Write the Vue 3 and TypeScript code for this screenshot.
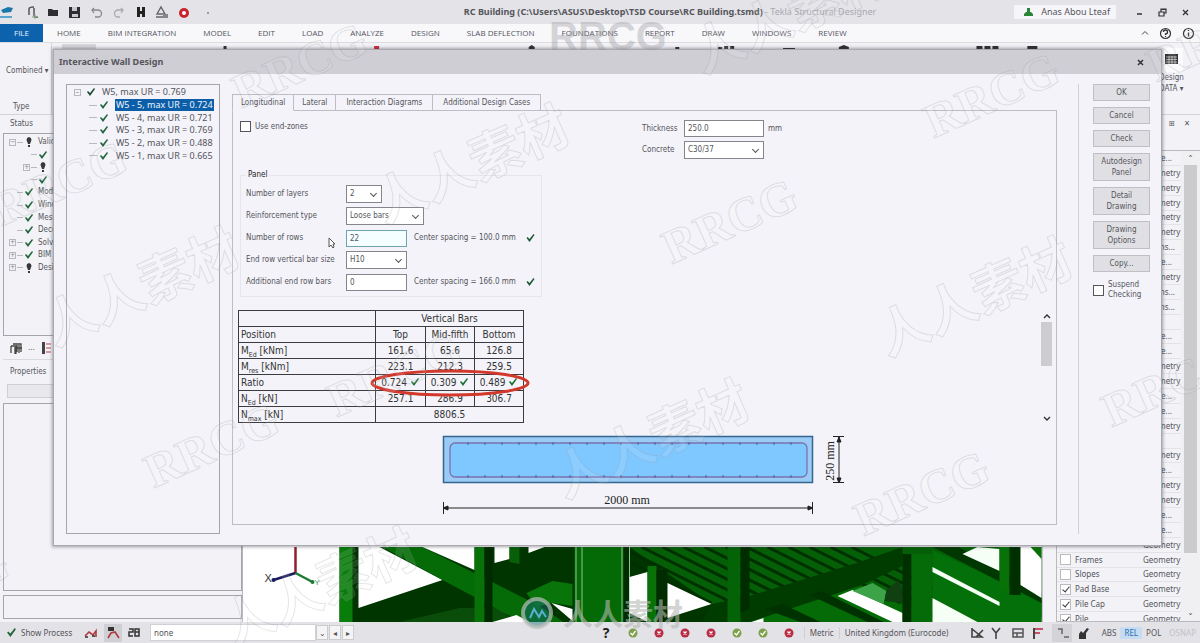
<script setup lang="ts">
import { ref } from 'vue'

const menus = ['HOME', 'BIM INTEGRATION', 'MODEL', 'EDIT', 'LOAD', 'ANALYZE', 'DESIGN', 'SLAB DEFLECTION', 'FOUNDATIONS', 'REPORT', 'DRAW', 'WINDOWS', 'REVIEW']

interface Node { label: string; mark: 'ok' | 'warn'; depth: number; box?: string }
const statusTree: Node[] = [
  { label: 'Validation', mark: 'warn', depth: 0, box: '−' },
  { label: '', mark: 'ok', depth: 1 },
  { label: '', mark: 'warn', depth: 1, box: '+' },
  { label: '', mark: 'ok', depth: 1 },
  { label: 'Model', mark: 'ok', depth: 0 },
  { label: 'Wind', mark: 'ok', depth: 0 },
  { label: 'Mesh', mark: 'ok', depth: 0 },
  { label: 'Decomposition', mark: 'ok', depth: 0 },
  { label: 'Solver', mark: 'ok', depth: 0, box: '+' },
  { label: 'BIM', mark: 'ok', depth: 0, box: '+' },
  { label: 'Design', mark: 'warn', depth: 0, box: '+' },
]

const wallNodes = ['W5 - 5, max UR = 0.724', 'W5 - 4, max UR = 0.721', 'W5 - 3, max UR = 0.769', 'W5 - 2, max UR = 0.488', 'W5 - 1, max UR = 0.665']
const selectedWall = ref(0)

const tabs = ['Longitudinal', 'Lateral', 'Interaction Diagrams', 'Additional Design Cases']
const activeTab = ref(0)

const useEndZones = ref(false)
const suspend = ref(false)
const thickness = ref('250.0')
const rows = ref('22')
const extraBars = ref('0')
const actions = ['OK', 'Cancel', 'Check', 'Autodesign Panel', 'Detail Drawing', 'Drawing Options', 'Copy...']

const results = [
  { base: 'M', sub: 'Ed', unit: '[kNm]', values: ['161.6', '65.6', '126.8'], ok: false },
  { base: 'M', sub: 'res', unit: '[kNm]', values: ['223.1', '212.3', '259.5'], ok: false },
  { base: 'Ratio', sub: '', unit: '', values: ['0.724', '0.309', '0.489'], ok: true },
  { base: 'N', sub: 'Ed', unit: '[kN]', values: ['257.1', '286.9', '306.7'], ok: false },
]

interface Layer { name: string; kind: string; on?: boolean }
const hidden = ['Name...', 'Geometry', 'Geometry', 'Geometry', 'Geometry', 'Geometry', 'Beams...', 'Name...', 'Geometry', 'Beams...', 'Beams...', '', 'Name...', 'Name...', 'Geometry', 'Geometry', 'Name...', 'Name...', 'Geometry', '', 'Geometry', 'Name...', 'Geometry', 'Geometry', 'Name...', 'Name...', 'Geometry']
const layers: Layer[] = [
  ...hidden.map((kind) => ({ name: '', kind })),
  { name: 'Frames', kind: 'Geometry', on: false },
  { name: 'Slopes', kind: 'Geometry', on: false },
  { name: 'Pad Base', kind: 'Geometry', on: true },
  { name: 'Pile Cap', kind: 'Geometry', on: true },
  { name: 'Pile', kind: 'Geometry', on: true },
]

const checks = [true, false, false, false, true, true, false]
const barTicks = Array.from({ length: 20 }, (_, i) => 468 + i * 17)
const joists = Array.from({ length: 13 }, (_, i) => i)

const latin = [[300, 66], [730, 222], [992, 96], [60, 184], [212, 446], [922, 494], [1170, 385], [-58, 590], [395, 375], [1215, 40]]
const han = [[472, 165], [142, 288], [975, 298], [652, 440], [320, 588], [790, 15]]
</script>

<template>
  <div class="app">
    <header class="titlebar">
      <svg class="quick" width="220" height="24" viewBox="0 0 220 24" aria-hidden="true">
        <path d="M1 10l7-3 5 1-2 4-8 1z" fill="#1a78a8" /><path d="M0 17h12" stroke="#2b93c9" stroke-width="1.5" />
        <path d="M29 15V9q0-2 5-2M34 8v7q0 3 4 2" fill="none" stroke="#555" stroke-width="1.5" /><path d="M35 14v5M32 17h6" stroke="#8a8" />
        <path d="M48 9h4l1 1h5v6H48z" fill="#2e2e30" />
        <path d="M69 7h11v11H69z" fill="#2d2d33" /><path d="M72 7h5v4h-5zM72 14h6v3h-6z" fill="#c9c9cf" />
        <path d="M92 10h6a3 3 0 0 1 0 7h-3M94 8l-2 2 2 3" fill="none" stroke="#888" stroke-width="1.3" />
        <path d="M123 10h-5a3 3 0 0 0 0 7h2M121 8l2 2-2 3" fill="none" stroke="#aaa" stroke-width="1.3" />
        <path d="M137 7h3v10h-3zM142 7h3v10h-3zM139 11h4v3h-4z" fill="#222" />
        <path d="M157 14l4-7 4 7zM156 17h12" fill="none" stroke="#666" stroke-width="1.4" /><path d="M163 14h5v3h-5z" fill="#888" />
        <circle cx="184" cy="13" r="5" fill="#c8232f" /><circle cx="184" cy="13" r="2" fill="#fff" />
        <circle cx="208" cy="13" r="1" fill="#888" />
      </svg>
      <h1 class="doc"><b>RC Building (C:\Users\ASUS\Desktop\TSD Course\RC Building.tsmd)</b><span> - Tekla Structural Designer</span></h1>
      <div class="user">
        <svg width="11" height="10" viewBox="0 0 11 10"><path d="M4 1h3v4h1l2 2v2H1V7l2-2h1z" fill="#2c8436" /></svg>
        <span>Anas Abou Lteaf</span>
      </div>
      <div class="win">
        <button aria-label="Minimize"><svg width="9" height="9" viewBox="0 0 9 9"><path d="M2 6h5" stroke="#333" stroke-width="1.5" /></svg></button>
        <button aria-label="Restore"><svg width="9" height="9" viewBox="0 0 9 9"><path d="M1 4h5v4H1zM3 4V1h5v4H6M1 4h5M3 1.500h5" fill="none" stroke="#333" stroke-width="1.2" /></svg></button>
        <button aria-label="Close"><svg width="9" height="9" viewBox="0 0 9 9"><path d="M2 2l5 5M7 2L2 7" stroke="#333" stroke-width="1.3" /></svg></button>
      </div>
    </header>

    <nav class="menubar">
      <button class="file">FILE</button>
      <button v-for="m in menus" :key="m" class="menu">{{ m }}</button>
      <div class="help">
        <svg width="8" height="8" viewBox="0 0 8 8"><path d="M1 5.500l3-3 3 3" fill="none" stroke="#444" /></svg>
        <svg width="13" height="13" viewBox="0 0 13 13"><circle cx="6.500" cy="6.500" r="5" fill="none" stroke="#333" stroke-width="1.2" /><path d="M4.500 5a2 2 0 1 1 2 2v1M6.500 9v1" fill="none" stroke="#333" stroke-width="1.3" /></svg>
        <svg width="13" height="13" viewBox="0 0 13 13"><circle cx="6.500" cy="6.500" r="5" fill="none" stroke="#333" stroke-width="1.2" /><path d="M6.500 3v1M6.500 5.500v4" stroke="#333" stroke-width="1.3" /></svg>
      </div>
    </nav>

    <section class="ribbon">
      <div class="combo"><span>Combined ▾</span><span class="type">Type</span></div>
      <svg class="peek" viewBox="52 0 1110 8" preserveAspectRatio="none" aria-hidden="true">
        <path d="M62 1h34v5H62z" fill="#d5d5da" />
        <path d="M224 3h3v3h-3zM530 4l3-2 3 2v2h-6zM677 4h4v2h-4zM720 4h4v2h-4zM726 3h4v3h-4zM732 3h4v3h-4zM785 5h12v1h-12zM841 4l5-2 5 2v2h-10zM979 3h6v4h-6zM987 3h6v4h-6zM995 3h6v4h-6zM1030 3h10v3h-10z" fill="#2c2c30" />
        <path d="M375 3h5v4h-5z" fill="#cf2a3b" />
      </svg>
      <div class="design">
        <svg width="24" height="24" viewBox="0 0 24 24"><rect x="0" y="0" width="24" height="24" fill="#fbfbfd" /><path d="M6 6h13v10H6z" fill="#333" /><path d="M7 9h11M7 11.500h11M7 14h11M10 8v8M13 8v8M16 8v8" stroke="#ddd" stroke-width=".7" /></svg>
        <span>Design</span><span>DATA ▾</span>
      </div>
    </section>

    <main class="work">
      <aside class="left">
        <h2>Status</h2>
        <div class="tree status">
          <ul>
            <li v-for="(n, i) in statusTree" :key="i" :class="{ child: n.depth === 1 }">
              <span class="exp" :class="{ boxed: n.box }">{{ n.box }}</span><i class="twig"></i>
              <svg v-if="n.mark === 'ok'" width="10" height="10" viewBox="0 0 10 10"><path d="M1 5l1-1 2 2 4-5 1 1-5 7z" fill="#20653c" /></svg>
              <svg v-else width="10" height="12" viewBox="0 0 10 12"><path d="M5 1a3 3 0 0 1 2.500 3L6 8H4L2.500 4A3 3 0 0 1 5 1zM4 9h2v2H4z" fill="#38383c" /></svg>
              <span>{{ n.label }}</span>
            </li>
          </ul>
        </div>
        <div class="paneltabs">
          <svg width="12" height="12" viewBox="0 0 12 12"><path d="M1 4h5v8M1 4v7M3 2h8v8M7 3v7M5 5v7M9 3v8M6 6h6" fill="none" stroke="#444" stroke-width="1.3" /></svg>
          <span>...</span>
          <svg width="10" height="12" viewBox="0 0 10 12"><path d="M1 0h3v12H1z" fill="#444" /><path d="M5 2h5M5 6h5M5 10h5" stroke="#b44" /></svg>
        </div>
        <h2>Properties</h2>
        <div class="propbox"></div>
        <div class="propgrid"></div>
        <div class="prophelp"></div>
      </aside>

      <div class="view">
        <svg viewBox="243 546 800 75" preserveAspectRatio="xMidYMax slice" aria-hidden="true">
          <path d="M296 546v26" stroke="#8d2030" stroke-width="2.500" /><path d="M296 572l-22 7" stroke="#1a1a5c" stroke-width="2.500" /><path d="M296 572l17 9" stroke="#1d7a35" stroke-width="2.500" />
          <circle cx="274" cy="579" r="2" fill="#1a1a5c" /><circle cx="313" cy="581" r="2" fill="#1d7a35" />
          <text x="265" y="581" class="axis">X</text><text x="315" y="584" class="axis y">Y</text>
          <path d="M340 546H1042V621H340z" fill="#003500" />
          <path d="M340 546h13v75h-13z" fill="#087d0a" />
          <path d="M359 546h21l63 33-84 28z" fill="#fff" />
          <path d="M400 621l60-14 40 0 15 14z" fill="#0a4d0a" />
          <path d="M383 546h40l117 59 24 16h-42l-79-42-60-33z" fill="#046b06" />
          <path d="M423 546h52v23z" fill="#fff" /><path d="M475 546h10v75h-10z" fill="#087209" /><path d="M485 546h8v75h-8z" fill="#002b00" />
          <path d="M495 546h15v12l-15 4zM529 546h16l-16 6z" fill="#fff" /><path d="M510 546h10v17l-10-2z" fill="#075f08" />
          <path d="M527 592l26-12 20 3v22l-21-3-15 4z" fill="#08750a" />
          <path d="M552 602l21 6v12zM493 621l24-7 13 7z" fill="#fff" />
          <path d="M630 546h412v70l-330-13z" fill="#045f06" />
          <g stroke="#002f00" stroke-width="3"><path v-for="j in joists" :key="j" :d="`M${600 + j * 21} 546l112 56`" /></g>
          <path d="M712 603l38-8 110-34 43-15v19l-120 56h-80z" fill="#003c00" />
          <path d="M750 621l110-36 45 20 40 16z" fill="#056b07" /><path d="M783 603l38 18h-20l-36-13zM822 590l62 31h-16l-58-27z" fill="#003100" />
          <path d="M575 546h55v75h-55z" fill="#036a05" /><path d="M624 546h6v75h-6z" fill="#002d00" /><path d="M576.500 546v75M582.500 546v75M622.500 546v75M630 546v75" stroke="#8fc490" stroke-width="1" />
          <path d="M630 576l18-5v50l-18-9z" fill="#fff" /><path d="M648 565h9v56h-9z" fill="#087209" /><path d="M657 569h11v52h-11z" fill="#002c00" />
          <path d="M668 582l44 21-44 14z" fill="#fff" /><path d="M728 546h13v75h-13z" fill="#056307" /><path d="M741 546h9v62l-9 4z" fill="#002d00" />
          <path d="M752 621l12-4v4zM838 595l15-6 50 23v9h-10l-40-19z" fill="#fff" /><path d="M853 590l20-8 14 8-3 13z" fill="#3ca348" /><path d="M887 589l12-10 4 9v14l-18-2z" fill="#103f12" />
          <path d="M933 549l109 50v22h-64l-45-24z" fill="#04700a" /><path d="M933 546h26l83 46v10z" fill="#013801" />
          <path d="M903 553h9v68h-9z" fill="#003000" /><path d="M912 553h21v68h-21z" fill="#056b08" />
          <path d="M933 566l67 35v4l-67-34zM933 597l45 24h-45zM963 553l15-7 22 2v22z" fill="#f6fff6" />
          <path d="M1000 546h10v46l-10-4z" fill="#087209" /><path d="M1010 546h11v48h-11z" fill="#003000" /><path d="M1021 546h21v51l-21-13z" fill="#fff" /><path d="M1031 546h11v12z" fill="#087209" />
        </svg>
      </div>

      <aside class="right">
        <div class="pin"><span>⊞</span><span>✕</span></div>
        <div class="layerlist">
          <ul>
            <li v-for="(l, i) in layers" :key="i">
              <label><input v-if="l.name" type="checkbox" :checked="l.on" /><span>{{ l.name }}</span></label>
              <span class="kind">{{ l.kind }}</span>
            </li>
          </ul>
          <div class="vbar"><span>⌃</span><i></i><span>⌄</span></div>
        </div>
      </aside>
    </main>

    <footer class="statusbar">
      <svg width="11" height="11" viewBox="0 0 10 10"><path d="M1 5l1-1 2 2 4-5 1 1-5 7z" fill="#20653c" /></svg>
      <span class="show">Show Process</span>
      <svg width="14" height="12" viewBox="0 0 14 12"><path d="M1 9l4-4 4 3 3-4v6" fill="none" stroke="#b03a40" stroke-width="1.600" /><path d="M1 10h3M8 9h3" stroke="#333" stroke-width="1.500" /></svg>
      <span class="pressed"><svg width="14" height="14" viewBox="0 0 14 14"><path d="M2 12l3-5 4-1 4 6" fill="none" stroke="#b03a40" stroke-width="1.600" /><path d="M2 1h6v4H2z" fill="#333" /></svg></span>
      <svg width="12" height="10" viewBox="0 0 12 10"><path d="M1 1h4v3H1v4h4M7 1h4v7H7zM7 4h4" fill="none" stroke="#333" stroke-width="1.500" /></svg>
      <input class="process" value="none" aria-label="Process" />
      <div class="steps"><button aria-label="Open list">⌄</button><button aria-label="Previous">◂</button><button aria-label="Next">▸</button></div>
      <div class="right-status">
        <b class="q">?</b>
        <svg v-for="(c, i) in checks" :key="i" class="dot" width="10" height="10" viewBox="0 0 10 10">
          <circle cx="5" cy="5" r="4.500" :fill="c ? '#7fa04a' : '#b92d45'" />
          <path v-if="c" d="M2.500 5l2 2 3-4" fill="none" stroke="#fff" stroke-width="1.300" />
          <path v-else d="M3.500 3.500l3 3M6.500 3.500l-3 3" stroke="#fff" stroke-width="1.300" />
        </svg>
        <span class="cell">Metric</span><span class="cell wide">United Kingdom (Eurocode)</span>
        <svg class="tools" width="130" height="18" viewBox="0 0 130 18" aria-hidden="true">
          <path d="M84 0h20v18H84z" fill="#d3d3d8" />
          <path d="M4 4v9h10L4 5M8 13l7-7M24 4l4 5 4-5M28 9v6" fill="none" stroke="#444" stroke-width="1.600" />
          <path d="M45 5h10v8H45zM45 9h10M49 9v4" fill="none" stroke="#555" stroke-width="1.500" />
          <path d="M66 4v11" stroke="#444" stroke-width="2" /><path d="M67 5h8M67 9h5" stroke="#c4536a" stroke-width="2" />
          <path d="M90 5h4v5M96 13h5" fill="none" stroke="#666" stroke-width="1.500" /><path d="M111 10l2-3 2 2 4-5 2 1-3 4v6h-7z" fill="#333" />
        </svg>
        <span class="mode">ABS</span><span class="mode on">REL</span><span class="mode">POL</span><span class="mode off">OSNAP</span>
      </div>
    </footer>

    <section class="dialog" role="dialog" aria-labelledby="dialog-title">
      <header><h2 id="dialog-title">Interactive Wall Design</h2><button aria-label="Close dialog"><svg width="9" height="9" viewBox="0 0 9 9"><path d="M2 2l5 5M7 2L2 7" stroke="#333" stroke-width="1.500" /></svg></button></header>
      <div class="body">
        <div class="tree walls">
          <ul>
            <li class="root"><span class="exp boxed">−</span><svg width="10" height="10" viewBox="0 0 10 10"><path d="M1 5l1-1 2 2 4-5 1 1-5 7z" fill="#1c4a30" /></svg><span class="name">W5, max UR = 0.769</span></li>
            <li v-for="(w, i) in wallNodes" :key="w" :class="{ selected: i === selectedWall }" @click="selectedWall = i">
              <i class="twig"></i><svg width="10" height="10" viewBox="0 0 10 10"><path d="M1 5l1-1 2 2 4-5 1 1-5 7z" fill="#20653c" /></svg><span class="name">{{ w }}</span>
            </li>
          </ul>
        </div>

        <div class="tabset">
          <div class="tabs" role="tablist">
            <button v-for="(t, i) in tabs" :key="t" role="tab" :aria-selected="i === activeTab" :class="{ active: i === activeTab }" @click="activeTab = i">{{ t }}</button>
          </div>
          <div class="pane">
            <div class="top">
              <label class="check"><input v-model="useEndZones" type="checkbox" />Use end-zones</label>
              <div class="material">
                <label for="thick">Thickness</label><input id="thick" v-model="thickness" class="dim" /><span>mm</span>
                <label for="conc">Concrete</label><span class="sel"><select id="conc"><option>C30/37</option></select></span>
              </div>
            </div>
            <fieldset>
              <legend>Panel</legend>
              <div class="row"><label for="layers">Number of layers</label><span class="sel w35"><select id="layers"><option>2</option></select></span></div>
              <div class="row"><label for="rtype">Reinforcement type</label><span class="sel w78"><select id="rtype"><option>Loose bars</option></select></span></div>
              <div class="row"><label for="rows">Number of rows</label><input id="rows" v-model="rows" class="focus" /><span class="note">Center spacing = 100.0 mm</span><svg width="11" height="10" viewBox="0 0 10 10"><path d="M1 5l1-1 2 2 4-5 1 1-5 7z" fill="#1c5a34" /></svg>
                <svg class="cursor" width="8" height="12" viewBox="0 0 8 12"><path d="M1 1v9l2-2 2 3 1-1-1-3h2z" fill="#fff" stroke="#555" /></svg></div>
              <div class="row"><label for="vsize">End row vertical bar size</label><span class="sel w61"><select id="vsize"><option>H10</option></select></span></div>
              <div class="row"><label for="extra">Additional end row bars</label><input id="extra" v-model="extraBars" /><span class="note">Center spacing = 166.0 mm</span><svg width="11" height="10" viewBox="0 0 10 10"><path d="M1 5l1-1 2 2 4-5 1 1-5 7z" fill="#1c5a34" /></svg></div>
            </fieldset>
            <div class="results">
              <div class="tablewrap">
                <table>
                  <colgroup><col class="c1" /><col class="c2" /><col class="c3" /><col class="c3" /></colgroup>
                  <thead>
                    <tr><th></th><th colspan="3" class="num">Vertical Bars</th></tr>
                    <tr><th>Position</th><th class="num">Top</th><th class="num">Mid-fifth</th><th class="num">Bottom</th></tr>
                  </thead>
                  <tbody>
                    <tr v-for="(r, i) in results" :key="i">
                      <td>{{ r.base }}<sub>{{ r.sub }}</sub> {{ r.unit }}</td>
                      <td v-for="v in r.values" :key="v" class="num">{{ v }}<svg v-if="r.ok" class="tick" width="10" height="10" viewBox="0 0 10 10"><path d="M1 5l1-1 2 2 4-5 1 1-5 7z" fill="#1e7038" /></svg></td>
                    </tr>
                    <tr><td>N<sub>max</sub> [kN]</td><td colspan="3" class="num">8806.5</td></tr>
                  </tbody>
                </table>
                <svg class="ring" width="164" height="30" viewBox="0 0 164 30" aria-hidden="true"><ellipse cx="82" cy="15" rx="78" ry="12" fill="none" stroke="#d2382c" stroke-width="3" /></svg>
              </div>
              <div class="scroll"><svg width="8" height="6" viewBox="0 0 8 6"><path d="M1 5l3-3 3 3" fill="none" stroke="#333" stroke-width="1.400" /></svg><i></i><svg width="8" height="6" viewBox="0 0 8 6"><path d="M1 1l3 3 3-3" fill="none" stroke="#333" stroke-width="1.400" /></svg></div>
            </div>
            <svg class="section" width="410" height="86" viewBox="440 434 410 86">
              <rect x="443.500" y="436.500" width="369" height="46" fill="#9acbf5" stroke="#34668f" stroke-width="1.500" />
              <rect x="450" y="443" width="357" height="34" rx="5" fill="#7fc8ff" stroke="#7a72b0" stroke-width="1.300" />
              <path v-for="t in barTicks" :key="t" :d="`M${t} 442v3M${t} 475v3`" stroke="#5d5792" />
              <path d="M443 508h370M443.500 502v12M812.500 502v12M443 508l5-2v4zM813 508l-5-2v4zM839 437v46M833 436.500h11M833 482.500h11M839 437l-2 5h4zM839 483l-2-5h4z" stroke="#222" fill="#222" />
              <text x="627" y="504" text-anchor="middle">2000 mm</text>
              <text transform="translate(834 461) rotate(-90)" text-anchor="middle">250 mm</text>
            </svg>
          </div>
        </div>

        <div class="actions">
          <button v-for="a in actions" :key="a">{{ a }}</button>
          <label class="check"><input v-model="suspend" type="checkbox" />Suspend Checking</label>
        </div>
      </div>
    </section>

    <svg class="marks" viewBox="0 0 1200 643" preserveAspectRatio="none" aria-hidden="true">
      <text v-for="(p, i) in latin" :key="i" class="latin" :transform="`translate(${p[0]} ${p[1]}) rotate(-24)`" text-anchor="middle" y="15">RRCG</text>
      <text v-for="(p, i) in han" :key="i" class="han" :transform="`translate(${p[0]} ${p[1]}) rotate(-24)`" text-anchor="middle" y="18">人人素材</text>
      <text x="608" y="50" text-anchor="middle" class="solid">RRCG</text>
      <circle cx="537" cy="613" r="14" fill="#1b6f7a" fill-opacity=".45" stroke="#b9bdb9" stroke-width="4" stroke-opacity=".7" />
      <path d="M530 618l4-9 5 8 3-6 4 6" fill="none" stroke="#5ab0d0" stroke-width="2" />
      <text x="563" y="625" class="brand">人人素材</text>
    </svg>
  </div>
</template>

<style>
body { margin: 0; }
</style>

<style scoped>
* { box-sizing: border-box; }
.app { position: relative; height: 100vh; min-height: 600px; overflow: hidden; display: flex; flex-direction: column; background: #f2f2f7; color: #55555b; font: 8px/12px "DejaVu Sans Condensed", "DejaVu Sans", sans-serif; }
button, input, select { font: inherit; color: inherit; margin: 0; border-radius: 0; }
button { padding: 0; background: none; border: 0; white-space: nowrap; }
h1, h2, ul { margin: 0; padding: 0; font-size: inherit; font-weight: normal; }
ul { list-style: none; }
svg { flex: none; display: block; }

.titlebar { flex: none; height: 24px; display: flex; align-items: center; background: #e4e3e8; }
.doc { flex: 1; padding-left: 106px; text-align: center; font: 9px/12px "Noto Sans", sans-serif; white-space: nowrap; }
.doc span { color: #a9a8ae; }
.user { display: flex; align-items: center; gap: 7px; background: #f6f6fa; height: 14px; padding: 0 6px 0 9px; margin-right: 19px; font: 9px/12px "Noto Sans", sans-serif; }
.win { display: flex; gap: 14px; padding-right: 10px; }

.menubar { flex: none; height: 19px; display: flex; align-items: center; gap: 27px; background: #f8f8fb; border-bottom: 1px solid #dcdce1; font-family: "Open Sans", sans-serif; }
.file { align-self: stretch; width: 43px; margin-right: -13px; background: #0c62ac; color: #e8f2fa; }
.help { margin-left: auto; display: flex; align-items: center; gap: 10px; padding-right: 5px; }

.ribbon { flex: none; height: 72px; display: flex; justify-content: space-between; border-bottom: 1px solid #d4d4da; }
.combo { width: 52px; padding: 22px 0 0 6px; display: flex; flex-direction: column; gap: 24px; white-space: nowrap; border-right: 1px solid #d4d4da; }
.type { padding-left: 7px; }
.peek { flex: 1; height: 8px; }
.design { width: 41px; padding-top: 5px; display: flex; flex-direction: column; align-items: flex-start; gap: 1px; line-height: 10px; }

.work { flex: 1; min-height: 0; display: flex; }
.left { width: 243px; flex: none; display: flex; flex-direction: column; padding: 3px 0 3px 3px; border-right: 1px solid #b5b5bb; }
.left h2 { padding-left: 7px; }
.tree { border: 1px solid #a5a5ac; }
.tree ul { display: flex; flex-direction: column; }
.tree li { flex: 1; display: flex; align-items: center; white-space: nowrap; }
.status { flex: 0 0 203px; margin-top: 3px; padding: 2px 0 0 5px; }
.status ul { height: 138px; }
.status li { gap: 1px; }
.status li > span:last-child { padding-left: 3px; }
.status li.child { padding-left: 14px; }
.exp { width: 7px; height: 7px; line-height: 5px; font-size: 7px; text-align: center; color: #888; }
.boxed { border: 1px solid #b8b8be; }
.twig { width: 6px; border-top: 1px solid #b8b8be; }
.paneltabs { height: 24px; display: flex; align-items: center; gap: 6px; padding-left: 7px; margin-bottom: 6px; border-bottom: 1px solid #d9d9de; }
.propbox { height: 14px; margin: 6px 0 5px 4px; background: #e9e9ed; border: 1px solid #cfcfd4; flex: none; }
.propgrid { flex: 1; border: 1px solid #a5a5ac; }
.prophelp { height: 24px; margin-top: 4px; border: 1px solid #a5a5ac; flex: none; }

.view { flex: 1; min-width: 0; display: flex; align-items: flex-end; background: #fff; }
.view svg { width: 100%; height: 75px; }
.axis { font: 11px "Liberation Sans", sans-serif; fill: #333; }
.axis.y { font-size: 8px; fill: #3a9a55; }

.right { width: 158px; flex: none; display: flex; flex-direction: column; border-left: 1px solid #c4c4ca; }
.pin { height: 35px; padding: 3px 10px 0 0; display: flex; justify-content: flex-end; gap: 9px; }
.layerlist { flex: 1; min-height: 0; display: flex; overflow: hidden; margin-left: 13px; border: 1px solid #b9b9bf; border-right: 0; }
.layerlist ul { flex: 1; height: calc(100% + 6px); display: flex; flex-direction: column; }
.layerlist li { flex: 1; min-height: 0; display: flex; align-items: center; border-bottom: 1px solid #e2e2e7; font: 8px/12px "Noto Sans", sans-serif; }
.layerlist label { width: 85px; display: flex; align-items: center; gap: 4px; padding-left: 3px; }
.kind { padding-left: 1px; flex: 1; }
.vbar { width: 19px; display: flex; flex-direction: column; align-items: center; background: #f0f0f3; padding: 2px 0; }
.vbar i { flex: 1; width: 13px; margin-bottom: 54px; background: #cbcbce; }

input[type="checkbox"] { appearance: none; width: 11px; height: 11px; border: 1px solid #55555b; background: #fff; flex: none; }
.layerlist input[type="checkbox"] { border-color: #bbb; }
input[type="checkbox"]:checked::after { content: ""; display: block; width: 3px; height: 6px; margin: 0 0 0 3px; border: solid #333; border-width: 0 1px 1px 0; transform: rotate(40deg); }

.statusbar { flex: none; height: 21px; display: flex; align-items: center; padding-left: 6px; background: #e3e2e7; font: 8px/12px "Noto Sans", sans-serif; white-space: nowrap; }
.show { width: 67px; padding-left: 4px; }
.pressed { margin: 0 6px; padding: 2px; background: #cfcfd4; }
.process { width: 166px; height: 17px; margin-left: 10px; padding: 0 3px; }
.statusbar .process { border-color: #d0d0d6; }
.steps { display: flex; gap: 1px; }
.steps button { width: 12px; height: 15px; background: #f4f4f7; border: 1px solid #ccc; line-height: 10px; }
.right-status { margin-left: auto; display: flex; align-items: center; }
.q { width: 25px; font-size: 14px; color: #222; }
.dot { margin-right: 16px; }
.dot:nth-last-of-type(2) { margin-right: 10px; }
.cell { padding: 0 5px; border-left: 1px solid #cfcfd5; }
.wide { width: 129px; }
.mode { padding: 0 4px; }
.mode.on { background: #c6dcf2; color: #2a6db0; }
.mode.off { color: #c2c2c8; }

.dialog { position: absolute; left: 53px; right: 38px; top: 49px; bottom: 97px; display: flex; flex-direction: column; background: #f3f3f9; border: 1px solid #a9a9ae; box-shadow: 0 0 3px 1px rgba(60, 60, 70, .45); }
.dialog header { flex: none; height: 24px; display: flex; align-items: center; justify-content: space-between; padding: 0 16px 0 5px; background: #cfced5; }
.dialog header h2 { font: bold 9px/12px "Noto Sans", sans-serif; }
.body { flex: 1; min-height: 0; display: flex; padding: 10px 1px 11px 12px; }
.walls { width: 154px; flex: none; padding: 1px 2px 0; font: 9px/12px "Noto Sans", sans-serif; }
.walls ul { height: 76px; }
.walls li { padding-left: 20px; gap: 2px; }
.walls li.root { padding-left: 5px; gap: 5px; }
.walls li.root .name { margin-left: 0; }
.walls .twig { width: 8px; }
.walls .name { padding: 0 1px; margin-left: 4px; }
.walls .selected .name { background: #0c5ea8; color: #f0f6fc; }

.tabset { flex: 1; min-width: 0; display: flex; flex-direction: column; margin-left: 12px; padding: 10px 0 9px; }
.tabs { display: flex; height: 17px; margin-bottom: -1px; }
.tabs button { padding: 0 8px; border: 1px solid #bdbdc3; border-left-width: 0; }
.tabs button:nth-child(3) { padding: 0 10px; }
.tabs button:nth-child(4) { padding: 0 10px; }
.tabs button.active { border-left-width: 1px; border-bottom-color: #f3f3f9; position: relative; }
.pane { flex: 1; min-height: 0; border: 1px solid #bdbdc3; padding: 8px 4px 0 5px; display: flex; flex-direction: column; }
.top { display: flex; flex: none; height: 50px; }
.check { display: flex; align-items: flex-start; gap: 4px; }
.top .check { width: 404px; padding: 2px 0 0 2px; }
.material { display: grid; grid-template-columns: 38px 80px auto; grid-auto-rows: 17px; gap: 4px 4px; align-items: center; align-self: start; padding-top: 1px; }
input:not([type]) { background: #fff; border: 1px solid #85858b; padding: 0 3px; min-width: 0; }
.dim { height: 17px; width: 80px; }
.sel { position: relative; display: block; height: 18px; width: 80px; }
.sel::after { content: ""; position: absolute; right: 6px; top: 6px; width: 4px; height: 4px; border: solid #555; border-width: 0 1px 1px 0; transform: rotate(45deg); }
select { appearance: none; width: 100%; height: 100%; padding: 0 3px; background: #fff; border: 1px solid #85858b; }
.w35 { width: 36px; } .w78 { width: 78px; } .w61 { width: 61px; }
fieldset { flex: none; width: 302px; margin: 0 0 0 2px; padding: 2px 0 0 5px; height: 128px; border: 1px solid #e6e6ec; min-width: 0; }
legend { padding: 0 2px; color: #222; line-height: 12px; }
.row { position: relative; display: flex; align-items: center; height: 22px; }
.row label { width: 100px; white-space: nowrap; }
.row input { width: 61px; height: 17px; }
.row .focus { border-color: #6fa3ae; background: #f4fdff; }
.note { width: 118px; padding-left: 7px; white-space: nowrap; }
.cursor { position: absolute; left: 82px; top: 10px; }

.results { display: flex; justify-content: space-between; margin-top: 13px; }
.tablewrap { position: relative; height: 113px; }
table { width: 286px; table-layout: fixed; border-collapse: collapse; font: 10px/12px "DejaVu Sans Condensed", "DejaVu Sans", sans-serif; color: #333; }
.c1 { width: 137px; } .c2 { width: 50px; }
th, td { height: 16px; padding: 0 2px; border: 1px solid #3c3c40; font-weight: normal; text-align: left; white-space: nowrap; }
.num { text-align: center; }
sub { font-size: 7px; line-height: 0; }
.tick { display: inline-block; margin-left: 3px; vertical-align: -1px; }
.ring { position: absolute; left: 130px; top: 58px; }
.scroll { width: 11px; display: flex; flex-direction: column; align-items: center; justify-content: space-between; padding: 3px 0 1px; }
.scroll i { width: 11px; height: 44px; background: #cdcdd0; margin: 3px 0 auto; }
.section { margin: 11px 0 0 202px; }
.section text { font: 12px "Liberation Serif", serif; fill: #222; }

.actions { width: 82px; flex: none; margin-left: 21px; padding: 0 0 0 14px; border-left: 1px solid #d0d0d6; display: flex; flex-direction: column; align-items: flex-start; gap: 6px; }
.actions button { width: 57px; min-height: 17px; padding: 2px 3px; background: #e0e0e4; border: 1px solid #bfbfc5; white-space: normal; line-height: 11px; }
.actions .check { width: 60px; margin-top: 2px; line-height: 10px; align-items: center; }

.marks { position: absolute; inset: 0; width: 100%; height: 100%; pointer-events: none; }
.latin { font: bold 48px "Liberation Serif", serif; fill: #fff; fill-opacity: .1; stroke: #8f8f96; stroke-opacity: .24; stroke-width: 1; }
.han { font: bold 52px "Noto Sans CJK SC", sans-serif; fill: #fff; fill-opacity: .1; stroke: #8f8f96; stroke-opacity: .22; stroke-width: 1; }
.solid { font: bold 40px "Liberation Sans", sans-serif; fill: #909096; fill-opacity: .35; }
.brand { font: bold 30px "Noto Sans CJK SC", sans-serif; fill: #b4b8b4; fill-opacity: .6; }
</style>
